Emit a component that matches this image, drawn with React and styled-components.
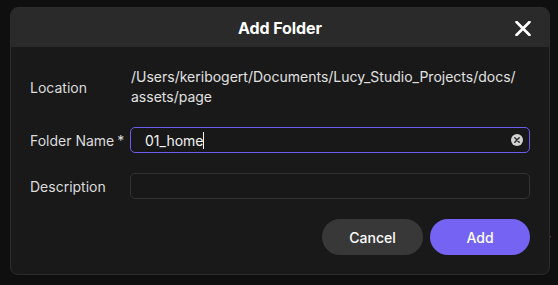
import React from "react";
import styled, { createGlobalStyle } from "styled-components";

const Global = createGlobalStyle`
  html, body { margin: 0; padding: 0; background: #0f0f0f; }
  body { font-family: Inter, "Noto Sans", sans-serif; -webkit-font-smoothing: antialiased; }
  * { box-sizing: border-box; }
`;

const Page = styled.div`
  position: relative;
  width: 558px;
  height: 285px;
  overflow: hidden;
  padding: 7px 0 0 10px;
`;

const BackText = styled.span`
  position: absolute;
  left: 519px;
  top: 230px;
  font-size: 14px;
  color: #8a8a8a;
  white-space: nowrap;
`;

const Dialog = styled.div`
  position: relative;
  z-index: 1;
  width: 540px;
  height: 268px;
  border: 1px solid #2c2c2c;
  border-radius: 8px;
  background: #191919;
  overflow: hidden;
  display: flex;
  flex-direction: column;
`;

const Header = styled.div`
  height: 39px;
  background: #2a2a2a;
  display: flex;
  align-items: center;
  justify-content: center;
  position: relative;
`;

const Title = styled.h2`
  margin: 0;
  font-size: 16px;
  font-weight: 700;
  color: #ffffff;
  letter-spacing: -0.1px;
`;

const CloseButton = styled.button`
  position: absolute;
  right: 17px;
  top: 11px;
  width: 18px;
  height: 18px;
  padding: 0;
  border: none;
  background: transparent;
  display: flex;
  align-items: center;
  justify-content: center;
`;

const Body = styled.div`
  padding: 20px 19px 19px 19px;
  display: flex;
  flex-direction: column;
  gap: 20px;
`;

const Row = styled.div`
  display: grid;
  grid-template-columns: 100px 400px;
  align-items: center;
`;

const Label = styled.label`
  font-size: 14px;
  color: #dcdcdc;
  white-space: nowrap;
`;

const Star = styled.span`
  margin-left: 3px;
`;

const PathText = styled.div`
  font-size: 14px;
  line-height: 20px;
  color: #e2e2e2;
  padding-left: 1px;
`;

const Field = styled.div`
  height: 26px;
  border: 1px solid ${(p) => (p.$focused ? "#6b5bf0" : "#333333")};
  border-radius: 5px;
  background: #181818;
  display: flex;
  align-items: center;
  padding: 0 6px 0 14px;
  font-size: 14px;
  color: #f2f2f2;
`;

const Value = styled.span`
  flex: 1;
  display: flex;
  align-items: center;
`;

const Caret = styled.span`
  display: inline-block;
  width: 1px;
  height: 17px;
  background: #f5f5f5;
`;

const ClearIcon = styled.span`
  width: 12px;
  height: 12px;
  border-radius: 50%;
  background: #d2d2d2;
  display: flex;
  align-items: center;
  justify-content: center;
`;

const Actions = styled.div`
  display: flex;
  justify-content: flex-end;
  gap: 7px;
`;

const Button = styled.button`
  width: ${(p) => (p.$primary ? "100px" : "101px")};
  height: 36px;
  border: none;
  border-radius: 18px;
  background: ${(p) => (p.$primary ? "#7563f4" : "#383838")};
  color: #ffffff;
  font-family: Inter, "Noto Sans", sans-serif;
  font-size: 14px;
  font-weight: 500;
`;

export default function App() {
  return (
    <>
      <Global />
      <Page>
        <BackText>Lucy</BackText>
        <Dialog>
          <Header>
            <Title>Add Folder</Title>
            <CloseButton aria-label="Close">
              <svg width="16" height="15" viewBox="0 0 16 15">
                <path d="M1.5 1 L14.5 14 M14.5 1 L1.5 14" stroke="#ffffff" strokeWidth="2.6" strokeLinecap="round" />
              </svg>
            </CloseButton>
          </Header>
          <Body>
            <Row>
              <Label>Location</Label>
              <PathText>
                /Users/keribogert/Documents/Lucy_Studio_Projects/docs/<wbr />assets/page
              </PathText>
            </Row>
            <Row>
              <Label>
                Folder Name<Star>*</Star>
              </Label>
              <Field $focused>
                <Value>
                  01_home<Caret />
                </Value>
                <ClearIcon>
                  <svg width="6" height="6" viewBox="0 0 6 6">
                    <path d="M0.8 0.8 L5.2 5.2 M5.2 0.8 L0.8 5.2" stroke="#2a2a2a" strokeWidth="1.4" strokeLinecap="round" />
                  </svg>
                </ClearIcon>
              </Field>
            </Row>
            <Row>
              <Label>Description</Label>
              <Field />
            </Row>
            <Actions>
              <Button>Cancel</Button>
              <Button $primary>Add</Button>
            </Actions>
          </Body>
        </Dialog>
      </Page>
    </>
  );
}
